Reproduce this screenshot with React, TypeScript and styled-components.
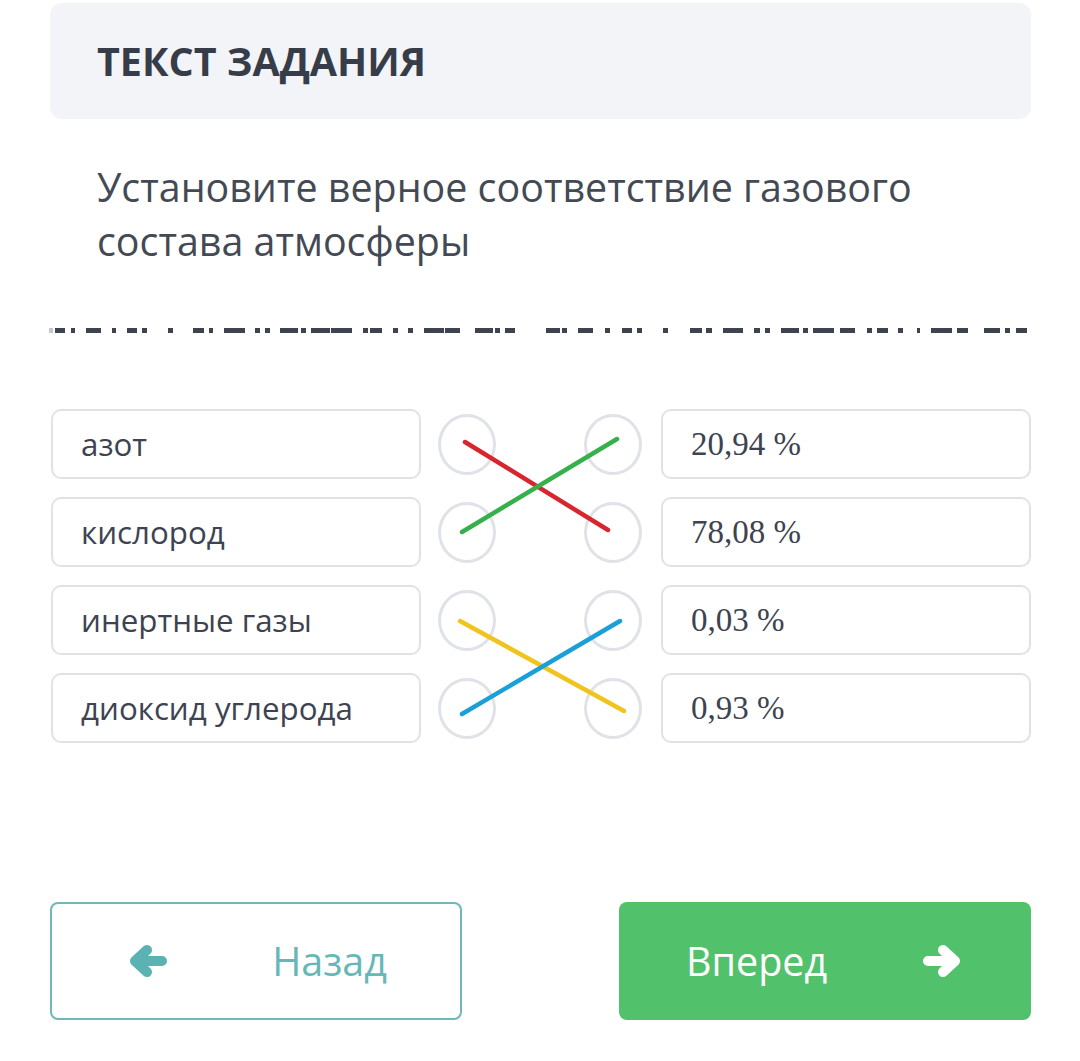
import React from "react";
import styled, { createGlobalStyle } from "styled-components";

const Global = createGlobalStyle`
  html, body { margin: 0; padding: 0; background: #ffffff; }
  body { font-family: "Open Sans", "Noto Sans", sans-serif; }
`;

const Page = styled.div`
  width: 981px;
  margin-left: 50px;
  padding-top: 3px;
  padding-bottom: 40px;
`;

const Header = styled.div`
  height: 116px;
  background: #f3f4f7;
  border-radius: 12px;
  display: flex;
  align-items: center;
  padding-left: 47px;
`;

const Title = styled.h1`
  margin: 0;
  font-size: 39.5px;
  font-weight: 700;
  color: #363d49;
  letter-spacing: 0;
`;

const Question = styled.p`
  margin: 41px 0 0 47px;
  font-size: 39.4px;
  line-height: 54px;
  color: #444a54;
  width: 880px;
`;

const Dashes = styled.div`
  position: relative;
  height: 5px;
  margin-top: 60px;
  display: flex;
`;

const Dash = styled.span<{ $faint?: boolean }>`
  height: 5px;
  flex: none;
  background: ${(p) => (p.$faint ? "#c4c7cc" : "#3d4450")};
`;

const Matching = styled.div`
  position: relative;
  margin-top: 76px;
  margin-left: 1px;
  display: flex;
  flex-direction: column;
  gap: 18px;
`;

const Row = styled.div`
  display: flex;
  align-items: center;
  height: 70px;
`;

const Box = styled.div<{ $serif?: boolean }>`
  box-sizing: border-box;
  width: 370px;
  height: 70px;
  border: 2px solid #e0e2e5;
  border-radius: 10px;
  display: flex;
  align-items: center;
  padding-left: 28px;
  color: #3d4350;
  font-family: ${(p) =>
    p.$serif ? `"Liberation Serif", "DejaVu Serif", serif` : `"Open Sans", sans-serif`};
  font-size: ${(p) => (p.$serif ? "33px" : "31.3px")};
`;

const Dots = styled.div`
  display: flex;
  align-items: center;
  gap: 88px;
  margin: 0 19px 0 17px;
`;

const Dot = styled.div`
  box-sizing: border-box;
  width: 58px;
  height: 61px;
  border: 3.5px solid #dfe2e6;
  border-radius: 50%;
`;

const Lines = styled.svg`
  position: absolute;
  left: 0;
  top: 0;
  pointer-events: none;
`;

const Buttons = styled.div`
  margin-top: 159px;
  display: flex;
  justify-content: space-between;
`;

const BackButton = styled.button`
  box-sizing: border-box;
  width: 412px;
  height: 118px;
  border: 2px solid #72b6b8;
  border-radius: 8px;
  background: #ffffff;
  display: flex;
  align-items: center;
  justify-content: space-between;
  padding: 0 73px 0 76px;
  color: #66b8b8;
  font-family: "Open Sans", sans-serif;
  font-size: 39.5px;
`;

const NextButton = styled.button`
  box-sizing: border-box;
  width: 412px;
  height: 118px;
  border: none;
  border-radius: 8px;
  background: #52c16b;
  display: flex;
  align-items: center;
  justify-content: space-between;
  padding: 0 69px 0 67px;
  color: #ffffff;
  font-family: "Open Sans", sans-serif;
  font-size: 39.5px;
`;

const ArrowSvg = styled.svg<{ $color: string }>`
  width: 40px;
  height: 34px;
  flex: none;
  color: ${(p) => p.$color};
`;

function Arrow({ dir, color }: { dir: "left" | "right"; color: string }) {
  return (
    <ArrowSvg $color={color} viewBox="0 0 40 34" style={dir === "right" ? { transform: "scaleX(-1)" } : undefined}>
      <path
        d="M34 17 H8 M19 6 L7 17 L19 28"
        fill="none"
        stroke="currentColor"
        strokeWidth="10"
        strokeLinecap="round"
        strokeLinejoin="round"
      />
    </ArrowSvg>
  );
}

const dashSegs: [number, number, boolean?][] = [
  [49, 53, true], [55, 65], [71, 75], [86, 101], [112, 116], [127, 137], [142, 147],
  [168, 173], [193, 204], [209, 213], [224, 245], [255, 260], [265, 270], [280, 298],
  [301, 306], [311, 330], [331, 352], [363, 368], [370, 382], [393, 398], [408, 413],
  [424, 444], [445, 460], [475, 493], [495, 500], [505, 515],
  [546, 560], [562, 567], [578, 593], [605, 610], [622, 632], [637, 642], [663, 668],
  [690, 702], [706, 712], [723, 743], [754, 760], [765, 770], [781, 799], [803, 808],
  [813, 834], [840, 855], [867, 872], [877, 888], [898, 903], [917, 920], [931, 952],
  [957, 968], [984, 1000], [1005, 1010], [1016, 1027],
];

const left = ["азот", "кислород", "инертные газы", "диоксид углерода"];
const right = ["20,94 %", "78,08 %", "0,03 %", "0,93 %"];

const links = [
  { c: "#d8262f", x1: 414, y1: 33, x2: 557, y2: 121 },
  { c: "#36b04c", x1: 411, y1: 123, x2: 566, y2: 30 },
  { c: "#f1c41d", x1: 409, y1: 212, x2: 573, y2: 302 },
  { c: "#1b9fd8", x1: 411, y1: 305, x2: 569, y2: 212 },
];

export default function App() {
  let prev = 50;
  return (
    <>
      <Global />
      <Page>
        <Header>
          <Title>ТЕКСТ ЗАДАНИЯ</Title>
        </Header>
        <Question>Установите верное соответствие газового состава атмосферы</Question>
        <Dashes>
          {dashSegs.map(([a, b, f], i) => {
            const ml = a - prev;
            prev = b;
            return <Dash key={i} $faint={f} style={{ marginLeft: ml, width: b - a }} />;
          })}
        </Dashes>
        <Matching>
          {left.map((l, i) => (
            <Row key={i}>
              <Box>{l}</Box>
              <Dots>
                <Dot />
                <Dot />
              </Dots>
              <Box $serif>{right[i]}</Box>
            </Row>
          ))}
          <Lines width="980" height="334" viewBox="0 0 980 334">
            {links.map((l, i) => (
              <line key={i} x1={l.x1} y1={l.y1} x2={l.x2} y2={l.y2} stroke={l.c} strokeWidth="4.5" strokeLinecap="round" />
            ))}
          </Lines>
        </Matching>
        <Buttons>
          <BackButton>
            <Arrow dir="left" color="#5ab3b2" />
            <span>Назад</span>
          </BackButton>
          <NextButton>
            <span>Вперед</span>
            <Arrow dir="right" color="#ffffff" />
          </NextButton>
        </Buttons>
      </Page>
    </>
  );
}
